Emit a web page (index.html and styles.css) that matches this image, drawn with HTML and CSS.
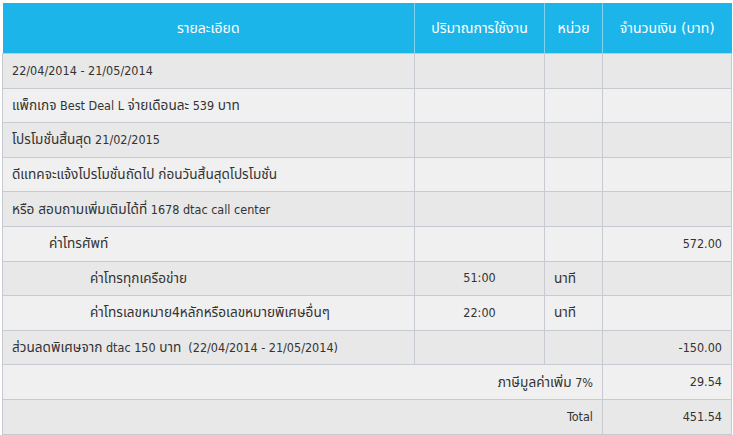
FILE: index.html
```html
<!DOCTYPE html>
<html lang="th">
<head>
<meta charset="utf-8">
<title>Bill</title>
<link rel="stylesheet" href="styles.css">
</head>
<body>
<table class="bill">
  <colgroup>
    <col class="c-desc">
    <col class="c-qty">
    <col class="c-unit">
    <col class="c-amt">
  </colgroup>
  <thead>
    <tr>
      <th>รายละเอียด</th>
      <th>ปริมาณการใช้งาน</th>
      <th>หน่วย</th>
      <th>จำนวนเงิน (บาท)</th>
    </tr>
  </thead>
  <tbody>
    <tr class="dark"><td>22/04/2014 - 21/05/2014</td><td></td><td></td><td></td></tr>
    <tr class="light"><td><span class="th">แพ็กเกจ</span> Best Deal L <span class="th">จ่ายเดือนละ</span> 539 <span class="th">บาท</span></td><td></td><td></td><td></td></tr>
    <tr class="dark"><td><span class="th">โปรโมชั่นสิ้นสุด</span> 21/02/2015</td><td></td><td></td><td></td></tr>
    <tr class="light"><td><span class="th">ดีแทคจะแจ้งโปรโมชั่นถัดไป ก่อนวันสิ้นสุดโปรโมชั่น</span></td><td></td><td></td><td></td></tr>
    <tr class="dark"><td><span class="th">หรือ สอบถามเพิ่มเติมได้ที่</span> 1678 dtac call center</td><td></td><td></td><td></td></tr>
    <tr class="light"><td class="lvl1"><span class="th">ค่าโทรศัพท์</span></td><td></td><td></td><td class="num">572.00</td></tr>
    <tr class="dark"><td class="lvl2"><span class="th">ค่าโทรทุกเครือข่าย</span></td><td class="qty">51:00</td><td><span class="th">นาที</span></td><td></td></tr>
    <tr class="light"><td class="lvl2"><span class="th">ค่าโทรเลขหมาย4หลักหรือเลขหมายพิเศษอื่นๆ</span></td><td class="qty">22:00</td><td><span class="th">นาที</span></td><td></td></tr>
    <tr class="dark"><td><span class="th">ส่วนลดพิเศษจาก</span> dtac 150 <span class="th">บาท</span>&nbsp; (22/04/2014 - 21/05/2014)</td><td></td><td></td><td class="num">-150.00</td></tr>
    <tr class="light"><td colspan="3" class="num"><span class="th">ภาษีมูลค่าเพิ่ม</span> 7%</td><td class="num">29.54</td></tr>
    <tr class="dark"><td colspan="3" class="num">Total</td><td class="num">451.54</td></tr>
  </tbody>
</table>
</body>
</html>
```

FILE: styles.css
```css
html, body {
  margin: 0;
  padding: 0;
  background: #ffffff;
}

body {
  padding: 3px 0 0 2px;
  font-family: "DejaVu Sans Condensed", "DejaVu Sans", "Noto Sans Thai", sans-serif;
}

.bill {
  border-collapse: collapse;
  table-layout: fixed;
  width: 729px;
  font-size: 12.5px;
  color: #333333;
}

.c-desc { width: 412px; }
.c-qty { width: 130px; }
.c-unit { width: 58px; }
.c-amt { width: 129px; }

.bill th {
  background: #1cb5e9;
  color: #ffffff;
  font-family: "DejaVu Sans", "Noto Sans Thai", sans-serif;
  font-weight: normal;
  font-size: 14px;
  height: 50px;
  padding: 0;
  text-align: center;
  border-left: 1px solid #7fd3ef;
  border-bottom: 1px solid #c7c9d1;
}

.bill th:first-child {
  border-left: none;
}

.bill td {
  height: 33.6px;
  padding: 0 9px;
  border: 1px solid #c8cad2;
  white-space: nowrap;
  line-height: 16px;
}

.bill .th {
  font-size: 13.6px;
}

.bill tr.dark td { background: #e8e8e8; }
.bill tr.light td { background: #f0f0f0; }

.bill td.lvl1 { padding-left: 46px; }
.bill td.lvl2 { padding-left: 87px; }
.bill td.num { text-align: right; }
.bill td.qty { text-align: center; }
```
